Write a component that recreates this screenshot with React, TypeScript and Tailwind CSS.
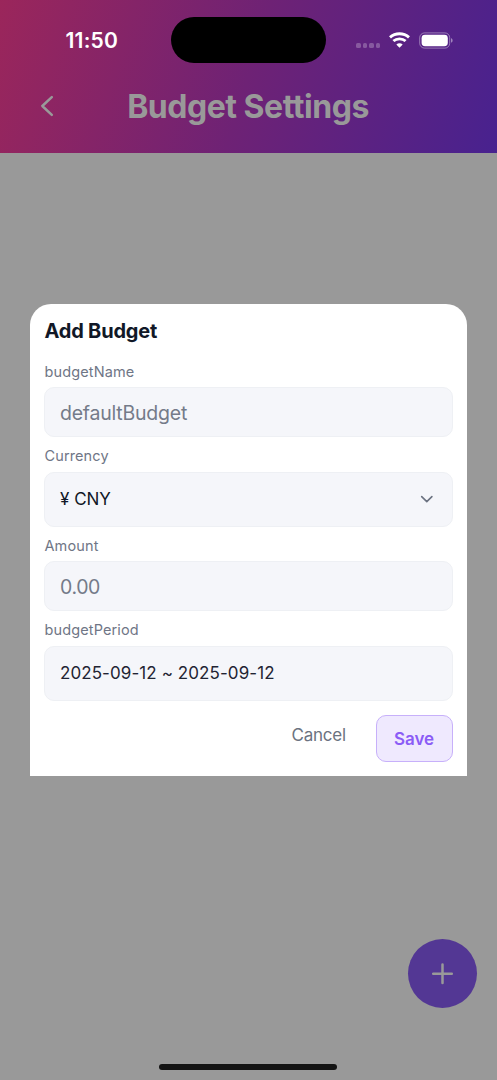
import type { ReactNode } from "react";

function StatusBar() {
  return (
    <div className="relative flex h-[80px] items-center text-white">
      <span className="ml-[65.5px] mt-[2px] w-[105.5px] text-[21px] leading-[26px] font-semibold tracking-[0.2px]">11:50</span>
      <div className="mt-[-1px] h-[46px] w-[155px] rounded-full bg-black" />
      <div className="ml-[30.3px] mt-[11px] flex gap-[2.2px]">
        {[0, 1, 2, 3].map((i) => (
          <i key={i} className="h-[4.4px] w-[4.4px] rounded-[1.6px] bg-white/25" />
        ))}
      </div>
      <svg className="ml-[9px] h-[16px] w-[21px]" viewBox="0 0 21 16" fill="none" stroke="white" strokeWidth="2.9">
        <path d="M1 5.3C6.3.6 14.7.6 20 5.3" />
        <path d="M4.4 9C7.7 6.1 13.3 6.1 16.6 9" />
        <path d="M7.3 12.5Q10.5 9.8 13.7 12.5L10.5 15.8Z" fill="white" stroke="none" />
      </svg>
      <svg className="ml-[9px] h-[17px] w-[35px]" viewBox="0 0 35 17" fill="none">
        <rect x=".7" y=".9" width="30" height="15.2" rx="4.8" stroke="white" strokeOpacity=".4" />
        <rect x="2.6" y="2.8" width="26.2" height="11.4" rx="3.4" fill="white" />
        <path d="M32 6.3C34.2 7 34.2 10 32 10.7Z" fill="white" fillOpacity=".45" />
      </svg>
    </div>
  );
}

function Field({ label, tall, children }: { label: string; tall?: boolean; children: ReactNode }) {
  return (
    <div className={tall ? "-mt-px h-[90px]" : "h-[85px]"}>
      <div className={"pl-[0.5px] text-[14.5px] leading-[18px] tracking-[0.12px] text-[#6f7686] " + (tall ? "h-[25px]" : "h-[24px]")}>
        {label}
      </div>
      <div
        className={
          "flex items-center justify-between rounded-[10px] border border-[#eef0f4] bg-[#f5f6fa] px-[15px] " +
          (tall ? "h-[54.5px]" : "h-[50px] pt-[3px]")
        }
      >
        {children}
      </div>
    </div>
  );
}

export default function App() {
  return (
    <div className="relative flex h-[1080px] w-[497px] flex-col overflow-hidden bg-[#999999] font-['Inter',sans-serif]">
      <header className="h-[153px] shrink-0 bg-[linear-gradient(107deg,#9b265b_0%,#6e2275_50%,#48228f_100%)]">
        <StatusBar />
        <div className="relative flex h-[52px] items-center justify-center text-[#999999]">
          <svg className="absolute left-[40px] top-[15px] h-[22px] w-[14px]" viewBox="0 0 14 22" fill="none" stroke="currentColor" strokeWidth="2.5" strokeLinecap="round" strokeLinejoin="round">
            <path d="M11.8 2.1L2.3 11L11.8 19.9" />
          </svg>
          <h1 className="mr-px pt-[2px] text-[32px] leading-[40px] font-bold tracking-[-0.48px]">Budget Settings</h1>
        </div>
      </header>

      <section className="mx-[29.5px] mt-[151px] h-[472px] w-[437.5px] shrink-0 rounded-t-[21px] bg-white px-[14.5px] pt-[14px]">
        <h2 className="h-[45px] pl-[0.5px] text-[20px] leading-[26px] font-bold tracking-[-0.2px] text-[#111827]">Add Budget</h2>
        <Field label="budgetName">
          <span className="text-[19.5px] tracking-[-0.23px] text-[#747b89]">defaultBudget</span>
        </Field>
        <Field label="Currency" tall>
          <span className="text-[17px] text-[#111827]">¥ CNY</span>
          <svg className="mr-[2.5px] h-[14px] w-[14px]" viewBox="0 0 14 14" fill="none" stroke="#6b7280" strokeWidth="1.6" strokeLinecap="round" strokeLinejoin="round">
            <path d="M1.7 4.6L6.8 9.6L11.9 4.6" />
          </svg>
        </Field>
        <Field label="Amount">
          <span className="text-[19.5px] tracking-[-0.4px] text-[#747b89]">0.00</span>
        </Field>
        <Field label="budgetPeriod" tall>
          <span className="text-[17px] tracking-[0.08px] text-[#1f2433]">2025-09-12 ~ 2025-09-12</span>
        </Field>
        <div className="mt-[4px] flex justify-end gap-[29.5px]">
          <button className="h-[41px] pt-[1px] text-[17px] tracking-[-0.2px] text-[#6b7280]">Cancel</button>
          <button className="h-[47px] w-[77px] rounded-[10px] border border-[#c7b0fa] bg-[#efe9fe] pt-[2px] text-[17px] font-semibold tracking-[-0.1px] text-[#8b5cf6]">Save</button>
        </div>
      </section>

      <button className="absolute left-[408px] top-[939px] flex h-[69px] w-[69px] items-center justify-center rounded-full bg-[#533794] text-[#999999]">
        <svg className="h-[22px] w-[22px]" viewBox="0 0 22 22" stroke="currentColor" strokeWidth="2.5" strokeLinecap="round">
          <path d="M10.5 1.5V20.1M1.2 10.8H19.8" />
        </svg>
      </button>
      <div className="absolute bottom-[10px] left-[159.4px] h-[6px] w-[178px] rounded-full bg-[#141414]" />
    </div>
  );
}
